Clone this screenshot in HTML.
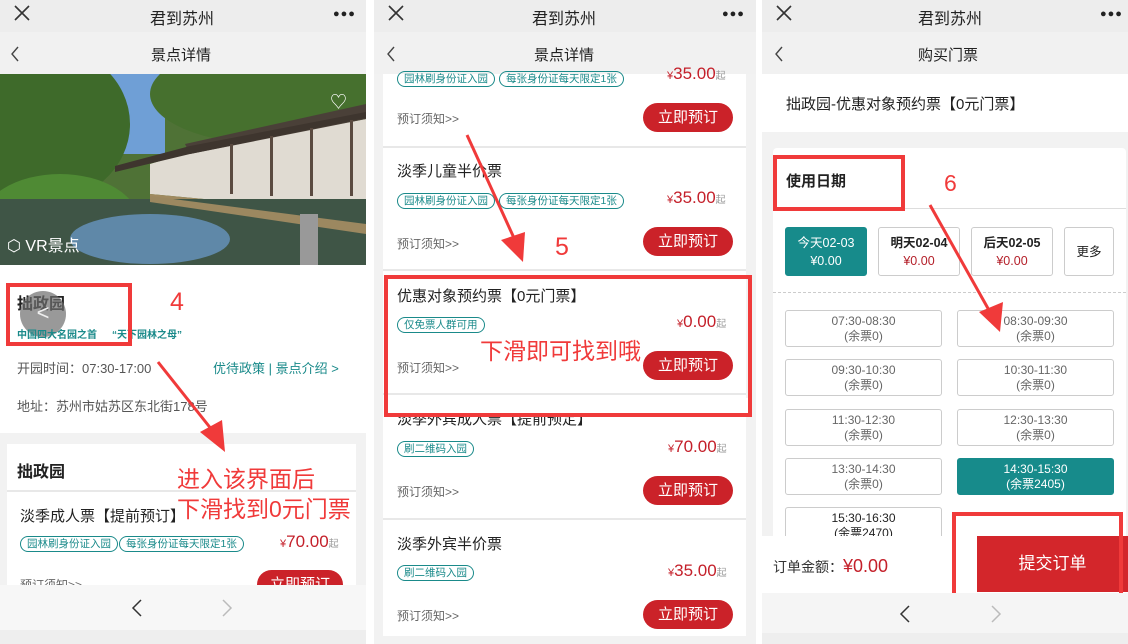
<!DOCTYPE html>
<html><head><meta charset="utf-8"><style>
*{margin:0;padding:0;box-sizing:border-box}
body{width:1128px;height:644px;position:relative;overflow:hidden;background:#fff;font-family:"Liberation Sans","Noto Sans CJK SC",sans-serif;color:#222}
.a{position:absolute;white-space:nowrap}
.bar1{background:#ededed;height:32px}
.bar2{background:#f1f1f1;height:42px}
.t{font-size:16px;color:#222}
.tag{position:absolute;border:1px solid #1a8a8a;color:#1a8a8a;border-radius:8px;font-size:10.5px;line-height:14px;padding:0 6px;white-space:nowrap}
.btn{position:absolute;background:#cb2229;color:#fff;border-radius:15px;font-size:15px;text-align:center;line-height:29px;width:90px;height:29px}
.pr{position:absolute;color:#c4202a;font-size:17px;white-space:nowrap}
.pr small{font-size:10px;color:#999}
.pr i{font-style:normal;font-size:11px}
.nt{position:absolute;color:#666;font-size:12px}
.sep{position:absolute;height:2px;background:#e8e8e8}
.slot{position:absolute;border:1px solid #ccc;border-radius:3px;width:157px;height:37px;text-align:center;font-size:12px;line-height:15px;color:#666;padding-top:3px}
.db{position:absolute;border:1px solid #ccc;border-radius:3px;height:49px;text-align:center;font-size:12.5px;line-height:18px;padding-top:6px;color:#222;font-weight:bold}
.db span{display:block;color:#b4202a;font-weight:normal}
.rb{position:absolute;border:4px solid #f03a3a}
.rt{position:absolute;color:#f03a3a;white-space:nowrap}
.x{position:absolute;width:16px;height:16px}
.dots{position:absolute;font-size:11px;letter-spacing:1px;top:8px;color:#222}
</style></head><body>

<!-- LEFT PANEL -->
<div class="a bar1" style="left:0;top:0;width:366px"></div>
<svg class="x" style="left:14px;top:5px" viewBox="0 0 16 16"><path d="M1 1L15 15M15 1L1 15" stroke="#333" stroke-width="1.6"/></svg>
<div class="a t" style="left:150px;top:5px">君到苏州</div>
<div class="dots" style="left:333px">●●●</div>
<div class="a bar2" style="left:0;top:32px;width:366px"></div>
<svg class="a" style="left:10px;top:46px" width="10" height="16"><path d="M8 1L2 8L8 15" fill="none" stroke="#444" stroke-width="1.4"/></svg>
<div class="a" style="left:151px;top:44px;font-size:15px">景点详情</div>
<svg class="a" style="left:0;top:74px" width="366" height="191">
<rect width="366" height="191" fill="#4f7236"/>
<rect x="105" y="0" width="60" height="80" fill="#6f9fd6"/>
<ellipse cx="40" cy="50" rx="90" ry="80" fill="#3e6a2a"/>
<ellipse cx="60" cy="150" rx="80" ry="50" fill="#4f8a34"/>
<ellipse cx="270" cy="20" rx="120" ry="50" fill="#46702e"/>
<polygon points="150,90 190,78 366,45 366,140 150,120" fill="#e0dbd2"/>
<polygon points="185,70 366,30 366,45 190,80" fill="#4a4038"/>
<polygon points="115,92 190,72 366,38 366,44 190,80 115,98" fill="#3e352e"/>
<g fill="#5a4a40"><rect x="230" y="70" width="3" height="50"/><rect x="270" y="62" width="3" height="60"/><rect x="310" y="54" width="3" height="68"/><rect x="350" y="46" width="3" height="76"/></g>
<polygon points="150,120 366,140 366,150 150,126" fill="#a08a60"/>
<rect x="0" y="125" width="366" height="66" fill="#3f5546"/>
<polygon points="150,122 366,150 366,160 150,128" fill="#9c8860"/>
<ellipse cx="150" cy="165" rx="80" ry="25" fill="#5f88a8"/>
<rect x="300" y="140" width="18" height="51" fill="#999"/>
</svg>
<div class="a" style="left:330px;top:88px;color:#fff;font-size:17px">♡</div>
<div class="a" style="left:7px;top:232px;color:#fff;font-size:16px">⬡ VR景点</div>
<div class="a" style="left:0;top:265px;width:366px;height:168px;background:#fff"></div>
<div class="a" style="left:17px;top:290px;font-size:16px;font-weight:bold">拙政园</div>
<div class="a" style="left:20px;top:291px;width:46px;height:46px;border-radius:50%;background:rgba(110,110,110,.7);color:#eee;font-size:22px;text-align:center;line-height:44px">&lt;</div>
<div class="a" style="left:17px;top:326px;font-size:10px;color:#1a8a8a;font-weight:bold">中国四大名园之首</div>
<div class="a" style="left:112px;top:326px;font-size:10px;color:#1a8a8a;font-weight:bold">“天下园林之母”</div>
<div class="rb" style="left:6px;top:283px;width:126px;height:63px"></div>
<div class="rt" style="left:170px;top:288px;font-size:25px">4</div>
<div class="a" style="left:17px;top:358px;font-size:13px;color:#555">开园时间：07:30-17:00</div>
<div class="a" style="left:213px;top:358px;font-size:13px;color:#1a8a8a">优待政策 | 景点介绍 &gt;</div>
<div class="a" style="left:17px;top:396px;font-size:13px;color:#555">地址：苏州市姑苏区东北街178号</div>
<div class="a" style="left:0;top:433px;width:366px;height:197px;background:#f2f2f2"></div>
<div class="a" style="left:7px;top:444px;width:349px;height:150px;background:#fff"></div>
<div class="a" style="left:17px;top:458px;font-size:16px;font-weight:bold">拙政园</div>
<div class="sep" style="left:7px;top:490px;width:349px"></div>
<div class="a" style="left:20px;top:505px;font-size:15px">淡季成人票【提前预订】</div>
<div class="tag" style="left:20px;top:536px">园林刷身份证入园</div>
<div class="tag" style="left:119px;top:536px">每张身份证每天限定1张</div>
<div class="pr" style="left:280px;top:532px"><i>¥</i>70.00<small>起</small></div>
<div class="nt" style="left:20px;top:576px">预订须知&gt;&gt;</div>
<div class="btn" style="left:257px;top:570px;width:86px">立即预订</div>
<div class="a" style="left:0;top:585px;width:366px;height:45px;background:#f7f7f7"></div>
<svg class="a" style="left:131px;top:599px" width="12" height="18"><path d="M10 1L2 9L10 17" fill="none" stroke="#333" stroke-width="1.5"/></svg>
<svg class="a" style="left:221px;top:599px" width="12" height="18"><path d="M2 1L10 9L2 17" fill="none" stroke="#bbb" stroke-width="1.5"/></svg>
<div class="a" style="left:0;top:630px;width:366px;height:14px;background:#eee"></div>
<div class="rt" style="left:177px;top:460px;font-size:23px">进入该界面后</div>
<div class="rt" style="left:177px;top:490px;font-size:23px">下滑找到0元门票</div>

<!-- MIDDLE PANEL -->
<div class="a" style="left:374px;top:0;width:382px;height:644px;background:#f2f2f2"></div>
<div class="a bar1" style="left:374px;top:0;width:382px"></div>
<svg class="x" style="left:388px;top:5px" viewBox="0 0 16 16"><path d="M1 1L15 15M15 1L1 15" stroke="#333" stroke-width="1.6"/></svg>
<div class="a t" style="left:532px;top:5px">君到苏州</div>
<div class="dots" style="left:722px">●●●</div>
<div class="a bar2" style="left:374px;top:32px;width:382px"></div>
<svg class="a" style="left:386px;top:46px" width="10" height="16"><path d="M8 1L2 8L8 15" fill="none" stroke="#444" stroke-width="1.4"/></svg>
<div class="a" style="left:534px;top:44px;font-size:15px">景点详情</div>
<div class="a" style="left:383px;top:74px;width:363px;height:562px;background:#fff"></div>
<div class="tag" style="left:397px;top:71px">园林刷身份证入园</div>
<div class="tag" style="left:499px;top:71px">每张身份证每天限定1张</div>
<div class="pr" style="left:667px;top:64px"><i>¥</i>35.00<small>起</small></div>
<div class="nt" style="left:397px;top:110px">预订须知&gt;&gt;</div>
<div class="btn" style="left:643px;top:103px">立即预订</div>
<div class="sep" style="left:383px;top:146px;width:363px"></div>
<div class="a" style="left:397px;top:160px;font-size:15px">淡季儿童半价票</div>
<div class="tag" style="left:397px;top:193px">园林刷身份证入园</div>
<div class="tag" style="left:499px;top:193px">每张身份证每天限定1张</div>
<div class="pr" style="left:667px;top:188px"><i>¥</i>35.00<small>起</small></div>
<div class="nt" style="left:397px;top:235px">预订须知&gt;&gt;</div>
<div class="btn" style="left:643px;top:227px">立即预订</div>
<div class="sep" style="left:383px;top:269px;width:363px"></div>
<div class="a" style="left:397px;top:285px;font-size:15px">优惠对象预约票【0元门票】</div>
<div class="tag" style="left:397px;top:317px">仅免票人群可用</div>
<div class="pr" style="left:677px;top:312px"><i>¥</i>0.00<small>起</small></div>
<div class="nt" style="left:397px;top:359px">预订须知&gt;&gt;</div>
<div class="btn" style="left:643px;top:351px">立即预订</div>
<div class="sep" style="left:383px;top:393px;width:363px"></div>
<div class="a" style="left:397px;top:408px;font-size:15px">淡季外宾成人票【提前预定】</div>
<div class="tag" style="left:397px;top:441px">刷二维码入园</div>
<div class="pr" style="left:668px;top:437px"><i>¥</i>70.00<small>起</small></div>
<div class="nt" style="left:397px;top:483px">预订须知&gt;&gt;</div>
<div class="btn" style="left:643px;top:476px">立即预订</div>
<div class="sep" style="left:383px;top:518px;width:363px"></div>
<div class="a" style="left:397px;top:533px;font-size:15px">淡季外宾半价票</div>
<div class="tag" style="left:397px;top:565px">刷二维码入园</div>
<div class="pr" style="left:668px;top:561px"><i>¥</i>35.00<small>起</small></div>
<div class="nt" style="left:397px;top:607px">预订须知&gt;&gt;</div>
<div class="btn" style="left:643px;top:600px">立即预订</div>
<div class="rb" style="left:384px;top:275px;width:368px;height:142px;border-bottom-width:6px"></div>
<div class="a" style="left:388px;top:398px;width:360px;height:15px;background:#fff"></div>
<div class="rt" style="left:480px;top:332px;font-size:23px">下滑即可找到哦</div>
<div class="rt" style="left:555px;top:233px;font-size:25px">5</div>

<!-- RIGHT PANEL -->
<div class="a" style="left:762px;top:0;width:366px;height:644px;background:#f2f2f2"></div>
<div class="a bar1" style="left:762px;top:0;width:366px"></div>
<svg class="x" style="left:776px;top:5px" viewBox="0 0 16 16"><path d="M1 1L15 15M15 1L1 15" stroke="#333" stroke-width="1.6"/></svg>
<div class="a t" style="left:918px;top:5px">君到苏州</div>
<div class="dots" style="left:1100px">●●●</div>
<div class="a bar2" style="left:762px;top:32px;width:366px"></div>
<svg class="a" style="left:774px;top:46px" width="10" height="16"><path d="M8 1L2 8L8 15" fill="none" stroke="#444" stroke-width="1.4"/></svg>
<div class="a" style="left:918px;top:44px;font-size:15px">购买门票</div>
<div class="a" style="left:762px;top:74px;width:366px;height:58px;background:#fff"></div>
<div class="a" style="left:786px;top:93px;font-size:15px">拙政园-优惠对象预约票【0元门票】</div>
<div class="a" style="left:773px;top:148px;width:353px;height:400px;background:#fff;border-radius:4px"></div>
<div class="a" style="left:786px;top:170px;font-size:15px;font-weight:bold">使用日期</div>
<div class="rb" style="left:773px;top:155px;width:132px;height:56px"></div>
<div class="rt" style="left:944px;top:170px;font-size:23px">6</div>
<div class="sep" style="left:905px;top:208px;width:221px;height:1px;background:#ddd"></div>
<div class="db" style="left:785px;top:227px;width:82px;background:#178b8b;border-color:#178b8b;color:#fff;font-weight:normal">今天02-03<span style="color:#fff">¥0.00</span></div>
<div class="db" style="left:878px;top:227px;width:82px">明天02-04<span>¥0.00</span></div>
<div class="db" style="left:971px;top:227px;width:82px">后天02-05<span>¥0.00</span></div>
<div class="db" style="left:1064px;top:227px;width:50px;line-height:36px;font-weight:normal">更多</div>
<div class="a" style="left:773px;top:292px;width:353px;border-top:1px dashed #ccc"></div>
<div class="slot" style="left:785px;top:310px">07:30-08:30<br>(余票0)</div>
<div class="slot" style="left:957px;top:310px">08:30-09:30<br>(余票0)</div>
<div class="slot" style="left:785px;top:359px">09:30-10:30<br>(余票0)</div>
<div class="slot" style="left:957px;top:359px">10:30-11:30<br>(余票0)</div>
<div class="slot" style="left:785px;top:409px">11:30-12:30<br>(余票0)</div>
<div class="slot" style="left:957px;top:409px">12:30-13:30<br>(余票0)</div>
<div class="slot" style="left:785px;top:458px">13:30-14:30<br>(余票0)</div>
<div class="slot" style="left:957px;top:458px;background:#178b8b;border-color:#178b8b;color:#fff">14:30-15:30<br>(余票2405)</div>
<div class="slot" style="left:785px;top:507px;color:#222;height:40px">15:30-16:30<br>(余票2470)</div>
<div class="a" style="left:762px;top:536px;width:366px;height:57px;background:#fff"></div>
<div class="a" style="left:773px;top:556px;font-size:14px;color:#333">订单金额：<span style="color:#c4202a;font-size:18px">¥0.00</span></div>
<div class="a" style="left:977px;top:536px;width:151px;height:56px;background:#d3262b;color:#fff;font-size:17px;text-align:center;line-height:56px">提交订单</div>
<div class="rb" style="left:952px;top:512px;width:171px;height:94px"></div>
<div class="a" style="left:762px;top:593px;width:366px;height:40px;background:#f5f5f5"></div>
<svg class="a" style="left:899px;top:605px" width="12" height="18"><path d="M10 1L2 9L10 17" fill="none" stroke="#333" stroke-width="1.5"/></svg>
<svg class="a" style="left:990px;top:605px" width="12" height="18"><path d="M2 1L10 9L2 17" fill="none" stroke="#bbb" stroke-width="1.5"/></svg>
<div class="a" style="left:762px;top:633px;width:366px;height:11px;background:#eee"></div>

<!-- ARROWS -->
<svg class="a" style="left:0;top:0" width="1128" height="644">
<g fill="#f03a3a" stroke="#f03a3a">
<line x1="158" y1="362" x2="212" y2="430" stroke-width="3"/>
<polygon points="225,452 200,432 222,420" stroke="none"/>
<line x1="467" y1="135" x2="514" y2="238" stroke-width="3"/>
<polygon points="523,262 501,240 525,232" stroke="none"/>
<line x1="930" y1="205" x2="990" y2="312" stroke-width="3"/>
<polygon points="1000,332 979,312 1003,302" stroke="none"/>
</g>
</svg>
</body></html>
